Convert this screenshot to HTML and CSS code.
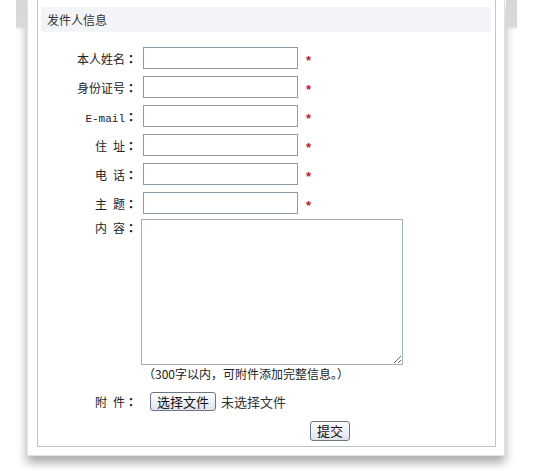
FILE: index.html
```html
<!DOCTYPE html>
<html lang="zh-CN">
<head>
<meta charset="utf-8">
<title>发件人信息</title>
<link rel="stylesheet" href="styles.css">
</head>
<body>
<div class="frame">
  <div class="panel">
    <div class="panel-title">发件人信息</div>
    <form class="form">
      <div class="row">
        <label class="label">本人姓名<span class="colon">：</span></label>
        <input class="field" type="text">
        <span class="req">*</span>
      </div>
      <div class="row">
        <label class="label">身份证号<span class="colon">：</span></label>
        <input class="field" type="text">
        <span class="req">*</span>
      </div>
      <div class="row">
        <label class="label"><span class="mono">E-mail</span><span class="colon">：</span></label>
        <input class="field" type="text">
        <span class="req">*</span>
      </div>
      <div class="row">
        <label class="label">住&ensp;址<span class="colon">：</span></label>
        <input class="field" type="text">
        <span class="req">*</span>
      </div>
      <div class="row">
        <label class="label">电&ensp;话<span class="colon">：</span></label>
        <input class="field" type="text">
        <span class="req">*</span>
      </div>
      <div class="row">
        <label class="label">主&ensp;题<span class="colon">：</span></label>
        <input class="field" type="text">
        <span class="req">*</span>
      </div>
      <div class="row row-content">
        <label class="label label-top">内&ensp;容<span class="colon">：</span></label>
        <textarea class="content"></textarea>
      </div>
      <div class="note">（300字以内，可附件添加完整信息。）</div>
      <div class="row row-file">
        <label class="label">附&ensp;件<span class="colon">：</span></label>
        <button type="button" class="btn btn-file">选择文件</button>
        <span class="file-name">未选择文件</span>
      </div>
      <div class="submit-row">
        <button type="button" class="btn btn-submit">提交</button>
      </div>
    </form>
  </div>
</div>
</body>
</html>
```
FILE: styles.css
```css
html, body {
  margin: 0;
  padding: 0;
  background: #ffffff;
}

body {
  font-family: "Noto Sans CJK SC", "Liberation Sans", sans-serif;
  font-size: 12px;
  color: #222;
  padding-bottom: 15px;
  min-height: 471px;
  box-sizing: border-box;
}

.frame {
  position: relative;
  margin-left: 27px;
  width: 459px;
  border: 1px solid #e2e2e2;
  border-top: none;
  padding: 0 8px 8px 9px;
  box-sizing: content-box;
  background: #fff;
  box-shadow: 0 6px 9px rgba(0, 0, 0, 0.22), -4px 8px 8px rgba(0, 0, 0, 0.08), 4px 8px 8px rgba(0, 0, 0, 0.06);
}

.frame::before,
.frame::after {
  content: "";
  position: absolute;
  top: 0;
  width: 11px;
  height: 30px;
  background: linear-gradient(to bottom, #d7d7d7 0, #d9d9d9 88%, rgba(217, 217, 217, 0) 100%);
}

.frame::before {
  left: -12px;
}

.frame::after {
  right: -13px;
}

.panel {
  border: 1px solid #c4c4c4;
  border-top: none;
  padding: 7px 4px 5px 3px;
  background: #fff;
}

.panel-title {
  height: 25px;
  line-height: 25px;
  padding-left: 6px;
  background: #f2f4f8;
  color: #333;
  font-size: 12px;
}

.form {
  margin-top: 15px;
}

.row {
  display: flex;
  align-items: center;
  margin-bottom: 7px;
}

.label {
  width: 95px;
  margin-right: 7px;
  text-align: right;
  font-size: 12px;
  color: #222;
  white-space: nowrap;
  flex: none;
}

.colon {
  font-family: "Noto Sans CJK TC", sans-serif;
  font-weight: bold;
  display: inline-block;
  width: 11px;
  text-align: right;
}

.mono {
  font-family: "Liberation Mono", monospace;
  font-size: 11px;
}

.field {
  width: 155px;
  height: 22px;
  box-sizing: border-box;
  margin: 0;
  padding: 0 3px;
  border: 1px solid #8d9ba6;
  background: #fff;
  font: 12px "Noto Sans CJK SC", sans-serif;
}

.req {
  margin-left: 8px;
  padding-top: 6px;
  color: #b3213c;
  font-family: "Liberation Sans", sans-serif;
  font-size: 13px;
  font-weight: bold;
  line-height: 16px;
}

.row-content {
  margin-top: -2px;
  margin-bottom: 0;
  align-items: flex-start;
}

.label-top {
  line-height: 18px;
}

.content {
  width: 262px;
  height: 146px;
  box-sizing: border-box;
  margin: 0 0 0 -2px;
  border: 1px solid #9fb0bd;
  padding: 2px;
  font: 12px "Noto Sans CJK SC", sans-serif;
  resize: both;
}

.note {
  margin: 3px 0 0 102px;
  line-height: 12px;
  height: 12px;
  font-size: 12px;
  color: #222;
  white-space: nowrap;
}

.row-file {
  margin-top: 12px;
  margin-bottom: 0;
  height: 19px;
}

.btn {
  margin: 0;
  font-family: "Noto Sans CJK SC", sans-serif;
  font-size: 13px;
  color: #111;
  border: 1px solid #6d7580;
  border-radius: 3px;
  background: linear-gradient(to bottom, #fbfcfd 0%, #eef2f6 50%, #dfe5ec 100%);
  line-height: 17px;
  cursor: pointer;
}

.btn-file {
  height: 19px;
  width: 66px;
  padding: 0;
  margin-left: 7px;
}

.file-name {
  margin-left: 5px;
  font-size: 13px;
  color: #333;
  line-height: 19px;
}

.submit-row {
  margin-top: 10px;
  padding-left: 269px;
  display: flex;
}

.btn-submit {
  height: 20px;
  width: 40px;
  padding: 0;
  line-height: 18px;
}
```
